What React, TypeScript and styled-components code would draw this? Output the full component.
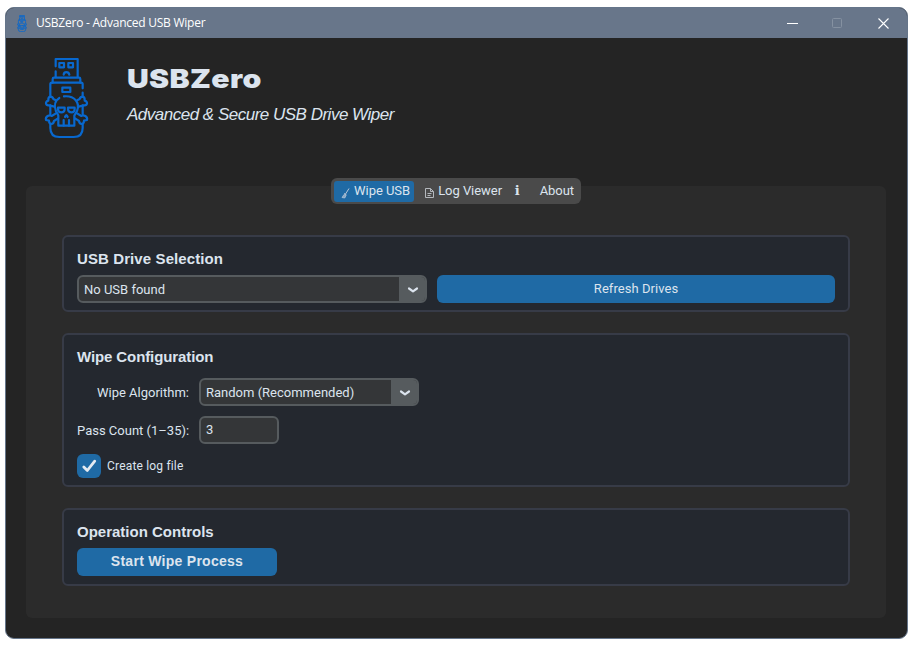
import React, { useState } from "react";
import styled, { createGlobalStyle } from "styled-components";

const GlobalStyle = createGlobalStyle`
  * { box-sizing: border-box; }
  body { margin: 0; background: #fff; overflow: hidden; }
  button, input { font: inherit; color: inherit; margin: 0; padding: 0; border: 0; }
`;

const Page = styled.div`
  width: 915px;
  height: 651px;
  padding: 7px 7px 12px 5px;
  font: 13px/16px Roboto, sans-serif;
  color: #dce4ee;
`;

const Window = styled.main`
  height: 632px;
  border: 1px solid #65758a;
  border-radius: 9px;
  overflow: hidden;
  background: #242424;
`;

const TitleBar = styled.header`
  height: 30px;
  display: flex;
  align-items: center;
  padding: 0 1px 0 11px;
  background: #68768a;
`;

const WindowTitle = styled.span`
  flex: 1;
  margin-left: 9px;
  font: 12px/16px "Open Sans", sans-serif;
  letter-spacing: -0.24px;
  color: #fff;
`;

const WindowButton = styled.button<{ $dim?: boolean }>`
  width: 45.5px;
  height: 29px;
  display: grid;
  place-items: center;
  background: transparent;
  color: ${(p) => (p.$dim ? "#8591a1" : "#fff")};
`;

const Brand = styled.section`
  height: 148px;
  display: flex;
  padding: 7px 0 0 24px;
`;

const Logo = styled.div`
  width: 80px;
  padding: 12px 0 0 14px;
`;

const BrandText = styled.div`
  padding: 18px 0 0 17px;
`;

const AppName = styled.h1`
  margin: 0;
  font: 900 26px/32px Inter, sans-serif;
  letter-spacing: 0.3px;
  transform: scaleX(1.16);
  transform-origin: left;
`;

const Tagline = styled.p`
  margin: 9px 0 0;
  font: italic 17px/22px "Liberation Sans", sans-serif;
  letter-spacing: -0.5px;
`;

const Panel = styled.section`
  width: 860px;
  height: 432px;
  margin-left: 20px;
  border-radius: 6px;
  background: #2b2b2b;
`;

const TabStrip = styled.nav`
  width: 250px;
  height: 26px;
  display: flex;
  align-items: center;
  margin: 0 auto;
  padding: 0 3px;
  border-radius: 6px;
  background: #4a4a4a;
  transform: translateY(-8px);
`;

const Tab = styled.button<{ $active?: boolean; $width: number; $gap: number }>`
  width: ${(p) => p.$width}px;
  height: 21px;
  display: flex;
  align-items: center;
  justify-content: flex-end;
  gap: ${(p) => p.$gap}px;
  padding-right: 4px;
  border-radius: 3px;
  white-space: nowrap;
  font: 13px/20px Roboto, sans-serif;
  letter-spacing: -0.05px;
  background: ${(p) => (p.$active ? "#1f6aa5" : "transparent")};
`;

const TabIcon = styled.span`
  display: flex;
  padding-top: 4px;
`;

const InfoMark = styled.b`
  font: bold 13px/18px "DejaVu Serif", serif;
`;

const Cards = styled.div`
  display: flex;
  flex-direction: column;
  gap: 21px;
  padding: 23px 36px 0;
`;

const Card = styled.section<{ $height: number }>`
  height: ${(p) => p.$height}px;
  padding: 13px 13px 0;
  border: 2px solid #373b47;
  border-radius: 6px;
  background: #24282f;
`;

const CardTitle = styled.h2<{ $spacing?: number }>`
  margin: 0;
  font: bold 15px/18px "Liberation Sans", sans-serif;
  letter-spacing: ${(p) => p.$spacing ?? 0}px;
`;

const DriveRow = styled.div`
  display: flex;
  gap: 10px;
  margin-top: 7px;
`;

const Select = styled.button<{ $width: number }>`
  width: ${(p) => p.$width}px;
  height: 28px;
  display: flex;
  overflow: hidden;
  border: 2px solid #565b5e;
  border-radius: 6px;
  background: #343638;
  text-align: left;
`;

const SelectValue = styled.span`
  flex: 1;
  padding: 1px 0 0 5px;
  line-height: 24px;
`;

const SelectArrow = styled.span`
  width: 26px;
  height: 24px;
  display: grid;
  place-items: center;
  padding: 1px 0 0 2px;
  background: #565b5e;
`;

const ActionButton = styled.button<{ $width: number; $strong?: boolean }>`
  width: ${(p) => p.$width}px;
  height: 28px;
  padding-bottom: ${(p) => (p.$strong ? 2 : 0)}px;
  border-radius: 6px;
  background: #1f6aa5;
  font: ${(p) => (p.$strong ? 'bold 14px/26px "Liberation Sans"' : "13px/26px Roboto")}, sans-serif;
  letter-spacing: ${(p) => (p.$strong ? "0.27px" : "0.05px")};
`;

const Fields = styled.div`
  padding-top: 12px;
`;

const Field = styled.label`
  display: grid;
  grid-template-columns: 112px auto;
  align-items: center;
  justify-content: start;
  column-gap: 10px;
  height: 28px;
  margin-bottom: 10px;
`;

const FieldLabel = styled.span`
  padding-top: 1px;
  text-align: right;
  white-space: nowrap;
`;

const CountInput = styled.input`
  width: 80px;
  height: 28px;
  padding: 0 5px 2px;
  border: 2px solid #565b5e;
  border-radius: 6px;
  background: #343638;
  outline: 0;
`;

const CheckRow = styled.button`
  height: 24px;
  display: flex;
  align-items: center;
  gap: 6px;
  background: transparent;
  font-size: 12px;
  letter-spacing: 0.18px;
`;

const CheckBox = styled.span<{ $checked: boolean }>`
  width: 24px;
  height: 24px;
  display: grid;
  place-items: center;
  border-radius: 6px;
  background: ${(p) => (p.$checked ? "#1f6aa5" : "#343638")};
`;

function UsbSkull({ width, height, weight = 6.6 }: { width: number; height: number; weight?: number }) {
  return (
    <svg width={width} height={height} viewBox="42 36 135 246" preserveAspectRatio="none" fill="none" stroke="#0868cf" strokeWidth={weight} strokeLinecap="round" strokeLinejoin="round">
      <path d="M77 64V42H143V98M77 79V98M68 113V102Q68 98 72 98H147Q151 98 151 102V113" />
      <path d="M88 54H102V67H88ZM115 54H129V67H115ZM101 89C102 79 116 79 118 89M97 128H121V141H97Z" />
      <path d="M61 154V118Q61 113 66 113H153Q158 113 158 118V130M158 143V154" />
      <path d="M88 159C76 166 71 181 78 199Q82 204 85 212V242H133V212Q137 205 141 198C151 173 134 151 102 154" />
      <path d="M101 225V242M117 225V242M105 216Q109 205 113 216" />
      <path d="M84 188H104V193Q103 202 94 202Q84 202 84 192ZM114 188H134V192Q134 202 125 202Q115 202 114 193Z" />
      <path d="M76 165L70 162Q68 155 61 155Q54 156 55 167Q48 169 48 175Q49 182 57 181L73 185M143 165L149 162Q151 155 158 155Q165 156 164 167Q171 169 171 175Q170 182 162 181L146 185" />
      <path d="M61 181V208M158 181V208M78 205L65 213Q60 209 53 213Q46 217 48 225L57 227Q57 236 64 237Q71 236 72 228L84 220M141 205L154 213Q159 209 166 213Q173 217 171 225L162 227Q162 236 155 237Q148 236 147 228L135 220" />
      <path d="M61 239V249Q61 276 88 276H131Q158 276 158 249V239" />
    </svg>
  );
}

const Chevron = () => (
  <svg width="12" height="8" viewBox="0 0 12 8" fill="none" stroke="#dce4ee" strokeWidth="2.2" strokeLinecap="round" strokeLinejoin="round">
    <path d="M2 2.5 6 5.3 10 2.5" />
  </svg>
);

const BrushIcon = () => (
  <svg width="9" height="11" viewBox="0 0 9 11" fill="none" stroke="#b9c7d8">
    <path d="M8 .5 4.5 6M3 5.5 5.5 7" />
    <path d="M3 6.5 1 9.5 3.8 10 5 7.5Z" fill="#87a9c6" strokeWidth=".7" />
  </svg>
);

const DocumentIcon = () => (
  <svg width="9" height="10" viewBox="0 0 9 10" fill="none" stroke="#b4b8bd">
    <path d="M.5.5H5.5L8.5 3.5V9.5H.5ZM5.5.5V3.5H8.5M2.5 5.5H6.5M2.5 7.5H5.5" />
  </svg>
);

export default function App() {
  const [logFile, setLogFile] = useState(true);
  const [passes, setPasses] = useState("3");
  return (
    <Page>
      <GlobalStyle />
      <Window>
        <TitleBar>
          <UsbSkull width={10} height={17} weight={11} />
          <WindowTitle>USBZero - Advanced USB Wiper</WindowTitle>
          <WindowButton aria-label="Minimize">
            <svg width="11" height="11" stroke="currentColor"><path d="M0 5.5H11" /></svg>
          </WindowButton>
          <WindowButton $dim aria-label="Maximize">
            <svg width="11" height="11" fill="none" stroke="currentColor"><rect x=".5" y=".5" width="9" height="9" rx="1" /></svg>
          </WindowButton>
          <WindowButton aria-label="Close">
            <svg width="11" height="11" stroke="currentColor" strokeWidth="1.1"><path d="M.5.5 10.5 10.5M10.5.5.5 10.5" /></svg>
          </WindowButton>
        </TitleBar>
        <Brand>
          <Logo>
            <UsbSkull width={45} height={82} />
          </Logo>
          <BrandText>
            <AppName>USBZero</AppName>
            <Tagline>Advanced &amp; Secure USB Drive Wiper</Tagline>
          </BrandText>
        </Brand>
        <Panel>
          <TabStrip>
            <Tab $active $width={80} $gap={4}><TabIcon><BrushIcon /></TabIcon>Wipe USB</Tab>
            <Tab $width={92} $gap={4}><TabIcon><DocumentIcon /></TabIcon>Log Viewer</Tab>
            <Tab $width={72} $gap={20}><InfoMark>i</InfoMark>About</Tab>
          </TabStrip>
          <Cards>
            <Card $height={77}>
              <CardTitle $spacing={0.1}>USB Drive Selection</CardTitle>
              <DriveRow>
                <Select $width={350}>
                  <SelectValue>No USB found</SelectValue>
                  <SelectArrow><Chevron /></SelectArrow>
                </Select>
                <ActionButton $width={398}>Refresh Drives</ActionButton>
              </DriveRow>
            </Card>
            <Card $height={154}>
              <CardTitle $spacing={-0.1}>Wipe Configuration</CardTitle>
              <Fields>
                <Field as="div">
                  <FieldLabel>Wipe Algorithm:</FieldLabel>
                  <Select $width={220}>
                    <SelectValue>Random (Recommended)</SelectValue>
                    <SelectArrow><Chevron /></SelectArrow>
                  </Select>
                </Field>
                <Field>
                  <FieldLabel>Pass Count (1–35):</FieldLabel>
                  <CountInput value={passes} onChange={(e) => setPasses(e.target.value)} />
                </Field>
                <CheckRow onClick={() => setLogFile(!logFile)}>
                  <CheckBox $checked={logFile}>
                    {logFile && (
                      <svg width="16" height="14" viewBox="0 0 16 14" fill="none" stroke="#e4eaf1" strokeWidth="2.8" strokeLinecap="round" strokeLinejoin="round">
                        <path d="M2.8 8 6.3 11.5 13.7 2.2" />
                      </svg>
                    )}
                  </CheckBox>
                  Create log file
                </CheckRow>
              </Fields>
            </Card>
            <Card $height={78}>
              <CardTitle>Operation Controls</CardTitle>
              <DriveRow>
                <ActionButton $width={200} $strong>Start Wipe Process</ActionButton>
              </DriveRow>
            </Card>
          </Cards>
        </Panel>
      </Window>
    </Page>
  );
}
